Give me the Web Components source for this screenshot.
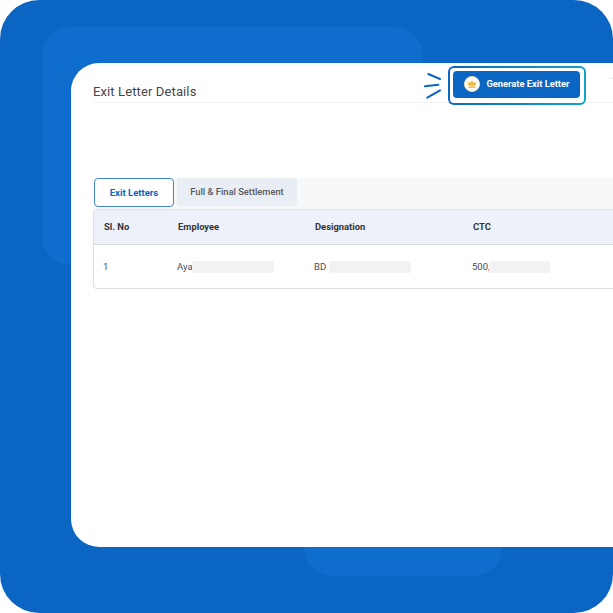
<!DOCTYPE html>
<html><head><meta charset="utf-8"><style>
html,body{margin:0;padding:0;background:#fff}
body{font-family:Roboto,"Liberation Sans",sans-serif}
</style></head><body>
<template id="t-frame"><style>
:host{display:block;width:613px;height:613px;position:relative;overflow:hidden;background:#0b66c3;border-radius:39px;color:#333}
.d{position:absolute;background:#0f6dce}
.d1{left:42px;top:27px;width:381px;height:238px;border-radius:28px}
.d2{left:304px;top:500px;width:198px;height:76px;border-radius:28px}
.wrap{position:relative;padding:63px 0 0 71px}
</style><div class="d d1"></div><div class="d d2"></div><div class="wrap"><slot></slot></div></template>

<template id="t-card"><style>
:host{display:block;width:620px;height:484px;background:#fff;border-radius:28px;padding-left:22px;box-sizing:border-box;overflow:hidden}
header{display:flex;align-items:flex-start;height:39px;border-bottom:1px solid #f0f1f3;box-sizing:content-box}
h1{margin:0;font:400 13px/16px Roboto,sans-serif;color:#45464a;padding-top:21px;width:331px;letter-spacing:.12px;flex:none}
.more{flex:none;width:10px;height:2px;background:#eeeff1;margin:14px 0 0 23px}
.body{padding:75px 0 0 1px}
</style><header><h1><slot name="title"></slot></h1><slot name="action"></slot><div class="more"></div></header><div class="body"><slot></slot></div></template>

<template id="t-cta"><style>
:host{display:flex;align-items:center;flex:none;margin-top:3px;height:39px;position:relative}
svg.rays{width:18px;height:28px;margin-right:6px;flex:none}
.ring{box-sizing:border-box;width:138px;height:39px;border:2.5px solid transparent;border-radius:6px;padding:2.5px;background:linear-gradient(#fff,#fff) padding-box,linear-gradient(90deg,#0b66c3,#12a5c6) border-box}
button{all:unset;box-sizing:border-box;display:flex;align-items:center;width:127px;height:27px;background:#0b66c3;border-radius:4px;padding:0 0 1px 11px;color:#fff;font:700 9.3px/12px Roboto,sans-serif;white-space:nowrap}
.ic{width:16px;height:16px;margin-right:7px;flex:none}
</style>
<svg class="rays" viewBox="0 0 18 28"><g fill="none" stroke="#0b66c3" stroke-width="2" stroke-linecap="round"><path d="M4.3 2 16 7"/><path d="M1 14.3 14.3 12.7"/><path d="M3.3 25.7 16 18.3"/></g></svg>
<div class="ring"><button><svg class="ic" viewBox="0 0 16 16"><circle cx="8" cy="8" r="7.6" fill="#fffaf0" stroke="#f6e3b0" stroke-width=".8"/><path d="M3.7 5.4 6 7.2 8 4.4 10 7.2 12.3 5.4 11.4 9.8H4.6Z" fill="#efb63a"/><rect x="4.7" y="10.5" width="6.6" height="1.5" fill="#efb63a"/></svg><slot></slot></button></div></template>

<template id="t-tabs"><style>
:host{display:flex;align-items:flex-start;height:31px;gap:3px;background:#f7f8fa}
</style><slot></slot></template>

<template id="t-tab"><style>
:host{display:flex;align-items:center;justify-content:center;box-sizing:border-box;font:500 9.3px/12px Roboto,sans-serif;white-space:nowrap;height:28px;width:120px;background:#e9eef5;color:#55585e;border-radius:3px}
:host([active]){width:80px;height:29px;background:#fff;border:1px solid #3f86cf;border-radius:4px;color:#0b66c3;font-size:9.5px;font-weight:700}
</style><slot></slot></template>

<template id="t-table"><style>
:host{display:block;margin-left:-1px;height:80px;border:1px solid #dedfe2;border-top-width:1.5px;border-right:0;border-radius:4px 0 0 4px;box-sizing:border-box;overflow:hidden}
</style><slot></slot></template>

<template id="t-row"><style>
:host{display:grid;grid-template-columns:74px 137px 158px 1fr;align-items:center;box-sizing:border-box;font:400 9.5px/12px Roboto,sans-serif;color:#4a4c50;height:43px;padding-left:9px}
:host([head]){height:35px;padding:0 0 0 10px;background:#eef1f9;border-bottom:1px solid #d9dbe0;font-weight:700;font-size:9.4px;color:#33353a}
</style><slot></slot></template>

<template id="t-mask"><style>
:host{display:flex;align-items:center}
i{display:block;height:12px;background:#f2f2f2;border-radius:2px;width:var(--w,80px);margin-left:var(--g,0);position:relative}
</style><slot></slot><i></i></template>

<exit-frame>
<exit-card>
<span slot="title">Exit Letter Details</span>
<exit-cta slot="action">Generate Exit Letter</exit-cta>
<exit-tabs><exit-tab active>Exit Letters</exit-tab><exit-tab>Full &amp; Final Settlement</exit-tab></exit-tabs>
<exit-table>
<exit-row head><span>Sl. No</span><span>Employee</span><span>Designation</span><span>CTC</span></exit-row>
<exit-row><span>1</span><exit-mask style="--w:82px;--g:-1px">Aya</exit-mask><exit-mask style="--w:82px;--g:3px">BD</exit-mask><exit-mask style="--w:61px;--g:-1px">500,</exit-mask></exit-row>
</exit-table>
</exit-card>
</exit-frame>
<script>
for(const [n,t] of [['exit-frame','t-frame'],['exit-card','t-card'],['exit-cta','t-cta'],['exit-tabs','t-tabs'],['exit-tab','t-tab'],['exit-table','t-table'],['exit-row','t-row'],['exit-mask','t-mask']]){
customElements.define(n,class extends HTMLElement{constructor(){super();this.attachShadow({mode:'open'}).appendChild(document.getElementById(t).content.cloneNode(true))}});
}
</script>
</body></html>
